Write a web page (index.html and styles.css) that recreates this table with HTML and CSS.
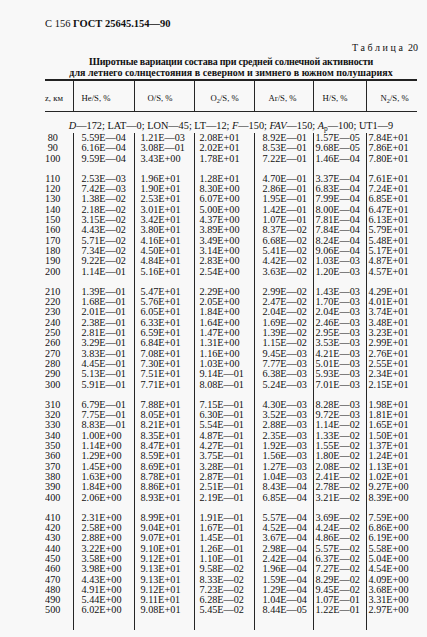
FILE: index.html
```html
<!DOCTYPE html>
<html lang="ru">
<head>
<meta charset="utf-8">
<title>ГОСТ 25645.154—90, Таблица 20</title>
<link rel="stylesheet" href="styles.css">
</head>
<body>
<div class="page">
  <div class="running-head">С 156 <b>ГОСТ 25645.154—90</b></div>
  <div class="tab-no"><span class="spaced">Таблица</span> 20</div>
  <div class="title"><span class="title-1">Широтные вариации состава при средней солнечной активности</span><br><span class="title-2">для летнего солнцестояния в северном и зимнего в южном полушариях</span></div>
  <table class="data">
    <colgroup>
      <col class="w-z"><col class="w-he"><col class="w-o"><col class="w-o2"><col class="w-ar"><col class="w-h"><col class="w-n">
    </colgroup>
    <thead>
      <tr>
        <th class="c-z">z, км</th>
        <th class="c-he">He/S, %</th>
        <th class="c-o">O/S, %</th>
        <th class="c-o2">O<sub>2</sub>/S, %</th>
        <th class="c-ar">Ar/S, %</th>
        <th class="c-h">H/S, %</th>
        <th class="c-n">N<sub>2</sub>/S, %</th>
      </tr>
    </thead>
    <tbody>
      <tr class="dline"><td colspan="7"><i>D</i>—172; LAT—0; LON—45; LT—12; <i>F</i>—150; <i>FAV</i>—150; <i>A</i><sub>p</sub>—100; UT1—9</td></tr>
      <tr><td class="c-z">80</td><td class="c-he">5.59E—04</td><td class="c-o">1.21E—03</td><td class="c-o2">2.08E+01</td><td class="c-ar">8.92E—01</td><td class="c-h">1.57E—05</td><td class="c-n">7.84E+01</td></tr>
      <tr><td class="c-z">90</td><td class="c-he">6.16E—04</td><td class="c-o">3.08E—01</td><td class="c-o2">2.02E+01</td><td class="c-ar">8.53E—01</td><td class="c-h">9.68E—05</td><td class="c-n">7.86E+01</td></tr>
      <tr><td class="c-z">100</td><td class="c-he">9.59E—04</td><td class="c-o">3.43E+00</td><td class="c-o2">1.78E+01</td><td class="c-ar">7.22E—01</td><td class="c-h">1.46E—04</td><td class="c-n">7.80E+01</td></tr>
      <tr class="gap"><td></td><td></td><td></td><td></td><td></td><td></td><td></td></tr>
      <tr><td class="c-z">110</td><td class="c-he">2.53E—03</td><td class="c-o">1.96E+01</td><td class="c-o2">1.28E+01</td><td class="c-ar">4.70E—01</td><td class="c-h">3.37E—04</td><td class="c-n">7.61E+01</td></tr>
      <tr><td class="c-z">120</td><td class="c-he">7.42E—03</td><td class="c-o">1.90E+01</td><td class="c-o2">8.30E+00</td><td class="c-ar">2.86E—01</td><td class="c-h">6.83E—04</td><td class="c-n">7.24E+01</td></tr>
      <tr><td class="c-z">130</td><td class="c-he">1.38E—02</td><td class="c-o">2.53E+01</td><td class="c-o2">6.07E+00</td><td class="c-ar">1.95E—01</td><td class="c-h">7.99E—04</td><td class="c-n">6.85E+01</td></tr>
      <tr><td class="c-z">140</td><td class="c-he">2.18E—02</td><td class="c-o">3.01E+01</td><td class="c-o2">5.00E+00</td><td class="c-ar">1.42E—01</td><td class="c-h">8.00E—04</td><td class="c-n">6.47E+01</td></tr>
      <tr><td class="c-z">150</td><td class="c-he">3.15E—02</td><td class="c-o">3.42E+01</td><td class="c-o2">4.37E+00</td><td class="c-ar">1.07E—01</td><td class="c-h">7.81E—04</td><td class="c-n">6.13E+01</td></tr>
      <tr><td class="c-z">160</td><td class="c-he">4.43E—02</td><td class="c-o">3.80E+01</td><td class="c-o2">3.89E+00</td><td class="c-ar">8.37E—02</td><td class="c-h">7.84E—04</td><td class="c-n">5.79E+01</td></tr>
      <tr><td class="c-z">170</td><td class="c-he">5.71E—02</td><td class="c-o">4.16E+01</td><td class="c-o2">3.49E+00</td><td class="c-ar">6.68E—02</td><td class="c-h">8.24E—04</td><td class="c-n">5.48E+01</td></tr>
      <tr><td class="c-z">180</td><td class="c-he">7.34E—02</td><td class="c-o">4.50E+01</td><td class="c-o2">3.14E+00</td><td class="c-ar">5.41E—02</td><td class="c-h">9.06E—04</td><td class="c-n">5.17E+01</td></tr>
      <tr><td class="c-z">190</td><td class="c-he">9.22E—02</td><td class="c-o">4.84E+01</td><td class="c-o2">2.83E+00</td><td class="c-ar">4.42E—02</td><td class="c-h">1.03E—03</td><td class="c-n">4.87E+01</td></tr>
      <tr><td class="c-z">200</td><td class="c-he">1.14E—01</td><td class="c-o">5.16E+01</td><td class="c-o2">2.54E+00</td><td class="c-ar">3.63E—02</td><td class="c-h">1.20E—03</td><td class="c-n">4.57E+01</td></tr>
      <tr class="gap"><td></td><td></td><td></td><td></td><td></td><td></td><td></td></tr>
      <tr><td class="c-z">210</td><td class="c-he">1.39E—01</td><td class="c-o">5.47E+01</td><td class="c-o2">2.29E+00</td><td class="c-ar">2.99E—02</td><td class="c-h">1.43E—03</td><td class="c-n">4.29E+01</td></tr>
      <tr><td class="c-z">220</td><td class="c-he">1.68E—01</td><td class="c-o">5.76E+01</td><td class="c-o2">2.05E+00</td><td class="c-ar">2.47E—02</td><td class="c-h">1.70E—03</td><td class="c-n">4.01E+01</td></tr>
      <tr><td class="c-z">230</td><td class="c-he">2.01E—01</td><td class="c-o">6.05E+01</td><td class="c-o2">1.84E+00</td><td class="c-ar">2.04E—02</td><td class="c-h">2.04E—03</td><td class="c-n">3.74E+01</td></tr>
      <tr><td class="c-z">240</td><td class="c-he">2.38E—01</td><td class="c-o">6.33E+01</td><td class="c-o2">1.64E+00</td><td class="c-ar">1.69E—02</td><td class="c-h">2.46E—03</td><td class="c-n">3.48E+01</td></tr>
      <tr><td class="c-z">250</td><td class="c-he">2.81E—01</td><td class="c-o">6.59E+01</td><td class="c-o2">1.47E+00</td><td class="c-ar">1.39E—02</td><td class="c-h">2.95E—03</td><td class="c-n">3.23E+01</td></tr>
      <tr><td class="c-z">260</td><td class="c-he">3.29E—01</td><td class="c-o">6.84E+01</td><td class="c-o2">1.31E+00</td><td class="c-ar">1.15E—02</td><td class="c-h">3.53E—03</td><td class="c-n">2.99E+01</td></tr>
      <tr><td class="c-z">270</td><td class="c-he">3.83E—01</td><td class="c-o">7.08E+01</td><td class="c-o2">1.16E+00</td><td class="c-ar">9.45E—03</td><td class="c-h">4.21E—03</td><td class="c-n">2.76E+01</td></tr>
      <tr><td class="c-z">280</td><td class="c-he">4.45E—01</td><td class="c-o">7.30E+01</td><td class="c-o2">1.03E+00</td><td class="c-ar">7.77E—03</td><td class="c-h">5.01E—03</td><td class="c-n">2.55E+01</td></tr>
      <tr><td class="c-z">290</td><td class="c-he">5.13E—01</td><td class="c-o">7.51E+01</td><td class="c-o2">9.14E—01</td><td class="c-ar">6.38E—03</td><td class="c-h">5.93E—03</td><td class="c-n">2.34E+01</td></tr>
      <tr><td class="c-z">300</td><td class="c-he">5.91E—01</td><td class="c-o">7.71E+01</td><td class="c-o2">8.08E—01</td><td class="c-ar">5.24E—03</td><td class="c-h">7.01E—03</td><td class="c-n">2.15E+01</td></tr>
      <tr class="gap"><td></td><td></td><td></td><td></td><td></td><td></td><td></td></tr>
      <tr><td class="c-z">310</td><td class="c-he">6.79E—01</td><td class="c-o">7.88E+01</td><td class="c-o2">7.15E—01</td><td class="c-ar">4.30E—03</td><td class="c-h">8.28E—03</td><td class="c-n">1.98E+01</td></tr>
      <tr><td class="c-z">320</td><td class="c-he">7.75E—01</td><td class="c-o">8.05E+01</td><td class="c-o2">6.30E—01</td><td class="c-ar">3.52E—03</td><td class="c-h">9.72E—03</td><td class="c-n">1.81E+01</td></tr>
      <tr><td class="c-z">330</td><td class="c-he">8.83E—01</td><td class="c-o">8.21E+01</td><td class="c-o2">5.54E—01</td><td class="c-ar">2.88E—03</td><td class="c-h">1.14E—02</td><td class="c-n">1.65E+01</td></tr>
      <tr><td class="c-z">340</td><td class="c-he">1.00E+00</td><td class="c-o">8.35E+01</td><td class="c-o2">4.87E—01</td><td class="c-ar">2.35E—03</td><td class="c-h">1.33E—02</td><td class="c-n">1.50E+01</td></tr>
      <tr><td class="c-z">350</td><td class="c-he">1.14E+00</td><td class="c-o">8.47E+01</td><td class="c-o2">4.27E—01</td><td class="c-ar">1.92E—03</td><td class="c-h">1.55E—02</td><td class="c-n">1.37E+01</td></tr>
      <tr><td class="c-z">360</td><td class="c-he">1.29E+00</td><td class="c-o">8.59E+01</td><td class="c-o2">3.75E—01</td><td class="c-ar">1.56E—03</td><td class="c-h">1.80E—02</td><td class="c-n">1.24E+01</td></tr>
      <tr><td class="c-z">370</td><td class="c-he">1.45E+00</td><td class="c-o">8.69E+01</td><td class="c-o2">3.28E—01</td><td class="c-ar">1.27E—03</td><td class="c-h">2.08E—02</td><td class="c-n">1.13E+01</td></tr>
      <tr><td class="c-z">380</td><td class="c-he">1.63E+00</td><td class="c-o">8.78E+01</td><td class="c-o2">2.87E—01</td><td class="c-ar">1.04E—03</td><td class="c-h">2.41E—02</td><td class="c-n">1.02E+01</td></tr>
      <tr><td class="c-z">390</td><td class="c-he">1.84E+00</td><td class="c-o">8.86E+01</td><td class="c-o2">2.51E—01</td><td class="c-ar">8.43E—04</td><td class="c-h">2.78E—02</td><td class="c-n">9.27E+00</td></tr>
      <tr><td class="c-z">400</td><td class="c-he">2.06E+00</td><td class="c-o">8.93E+01</td><td class="c-o2">2.19E—01</td><td class="c-ar">6.85E—04</td><td class="c-h">3.21E—02</td><td class="c-n">8.39E+00</td></tr>
      <tr class="gap"><td></td><td></td><td></td><td></td><td></td><td></td><td></td></tr>
      <tr><td class="c-z">410</td><td class="c-he">2.31E+00</td><td class="c-o">8.99E+01</td><td class="c-o2">1.91E—01</td><td class="c-ar">5.57E—04</td><td class="c-h">3.69E—02</td><td class="c-n">7.59E+00</td></tr>
      <tr><td class="c-z">420</td><td class="c-he">2.58E+00</td><td class="c-o">9.04E+01</td><td class="c-o2">1.67E—01</td><td class="c-ar">4.52E—04</td><td class="c-h">4.24E—02</td><td class="c-n">6.86E+00</td></tr>
      <tr><td class="c-z">430</td><td class="c-he">2.88E+00</td><td class="c-o">9.07E+01</td><td class="c-o2">1.45E—01</td><td class="c-ar">3.67E—04</td><td class="c-h">4.86E—02</td><td class="c-n">6.19E+00</td></tr>
      <tr><td class="c-z">440</td><td class="c-he">3.22E+00</td><td class="c-o">9.10E+01</td><td class="c-o2">1.26E—01</td><td class="c-ar">2.98E—04</td><td class="c-h">5.57E—02</td><td class="c-n">5.58E+00</td></tr>
      <tr><td class="c-z">450</td><td class="c-he">3.58E+00</td><td class="c-o">9.12E+01</td><td class="c-o2">1.10E—01</td><td class="c-ar">2.42E—04</td><td class="c-h">6.37E—02</td><td class="c-n">5.04E+00</td></tr>
      <tr><td class="c-z">460</td><td class="c-he">3.98E+00</td><td class="c-o">9.13E+01</td><td class="c-o2">9.58E—02</td><td class="c-ar">1.96E—04</td><td class="c-h">7.27E—02</td><td class="c-n">4.54E+00</td></tr>
      <tr><td class="c-z">470</td><td class="c-he">4.43E+00</td><td class="c-o">9.13E+01</td><td class="c-o2">8.33E—02</td><td class="c-ar">1.59E—04</td><td class="c-h">8.29E—02</td><td class="c-n">4.09E+00</td></tr>
      <tr><td class="c-z">480</td><td class="c-he">4.91E+00</td><td class="c-o">9.12E+01</td><td class="c-o2">7.23E—02</td><td class="c-ar">1.29E—04</td><td class="c-h">9.45E—02</td><td class="c-n">3.68E+00</td></tr>
      <tr><td class="c-z">490</td><td class="c-he">5.44E+00</td><td class="c-o">9.11E+01</td><td class="c-o2">6.28E—02</td><td class="c-ar">1.04E—04</td><td class="c-h">1.07E—01</td><td class="c-n">3.31E+00</td></tr>
      <tr><td class="c-z">500</td><td class="c-he">6.02E+00</td><td class="c-o">9.08E+01</td><td class="c-o2">5.45E—02</td><td class="c-ar">8.44E—05</td><td class="c-h">1.22E—01</td><td class="c-n">2.97E+00</td></tr>
      <tr class="tail"><td></td><td></td><td></td><td></td><td></td><td></td><td></td></tr>
    </tbody>
  </table>
</div>
</body>
</html>
```

FILE: styles.css
```css
body {
  margin: 0;
  background: #f8f8f8;
  color: #111;
  font-family: "Liberation Serif", "DejaVu Serif", serif;
}

.page {
  width: 372px;
  margin-left: 45px;
}

.running-head {
  margin-top: 18px;
  font-size: 10.5px;
  line-height: 12px;
}

.tab-no {
  margin-top: 12px;
  margin-right: -1px;
  text-align: right;
  font-size: 10px;
  line-height: 12px;
}

.spaced {
  letter-spacing: 2.6px;
}

.title {
  margin-top: 2px;
  text-align: center;
  font-weight: bold;
  font-size: 10px;
  line-height: 11px;
  white-space: nowrap;
}

.title-1 {
  letter-spacing: -0.2px;
}

sub {
  font-size: 0.72em;
  line-height: 0;
  vertical-align: -2px;
}

.data {
  width: 372px;
  margin-top: 1px;
  border-collapse: collapse;
  table-layout: fixed;
  border-top: 2px solid #222;
  font-size: 10.2px;
}

.w-z { width: 28px; }
.w-he { width: 61px; }
.w-o { width: 60px; }
.w-o2 { width: 60px; }
.w-ar { width: 59px; }
.w-h { width: 53px; }
.w-n { width: 51px; }

.data th {
  height: 27px;
  padding: 3px 0 0;
  font-weight: normal;
  font-size: 8.7px;
  text-align: left;
  white-space: nowrap;
  border-bottom: 1px solid #262626;
  border-left: 1px solid #262626;
}

.data th.c-z { border-left: none; }
.data th.c-he { padding-left: 8px; }
.data th.c-o { padding-left: 13px; }
.data th.c-o2 { padding-left: 16px; }
.data th.c-ar { padding-left: 14px; }
.data th.c-h { padding-left: 9px; }
.data th.c-n { padding-left: 14px; }

.data td {
  height: 10.3px;
  padding: 0;
  line-height: 10.3px;
  white-space: nowrap;
  overflow: hidden;
  border-left: 1px solid #262626;
}

.data td:first-child { border-left: none; }

.data td.c-z {
  text-align: center;
  padding-right: 12px;
}
.data td.c-he { padding-left: 8px; }
.data td.c-o { padding-left: 6px; }
.data td.c-o2 { padding-left: 5px; }
.data td.c-ar { padding-left: 8px; }
.data td.c-h { padding-left: 2px; }
.data td.c-n { padding-left: 2px; }

.data tr.dline td {
  height: 11px;
  padding: 8px 0 2px;
  line-height: 11px;
  font-size: 10.3px;
  text-align: center;
  border-left: none;
}

.data tr.gap td { height: 10px; }
.data tr.tail td { height: 14px; }
```
